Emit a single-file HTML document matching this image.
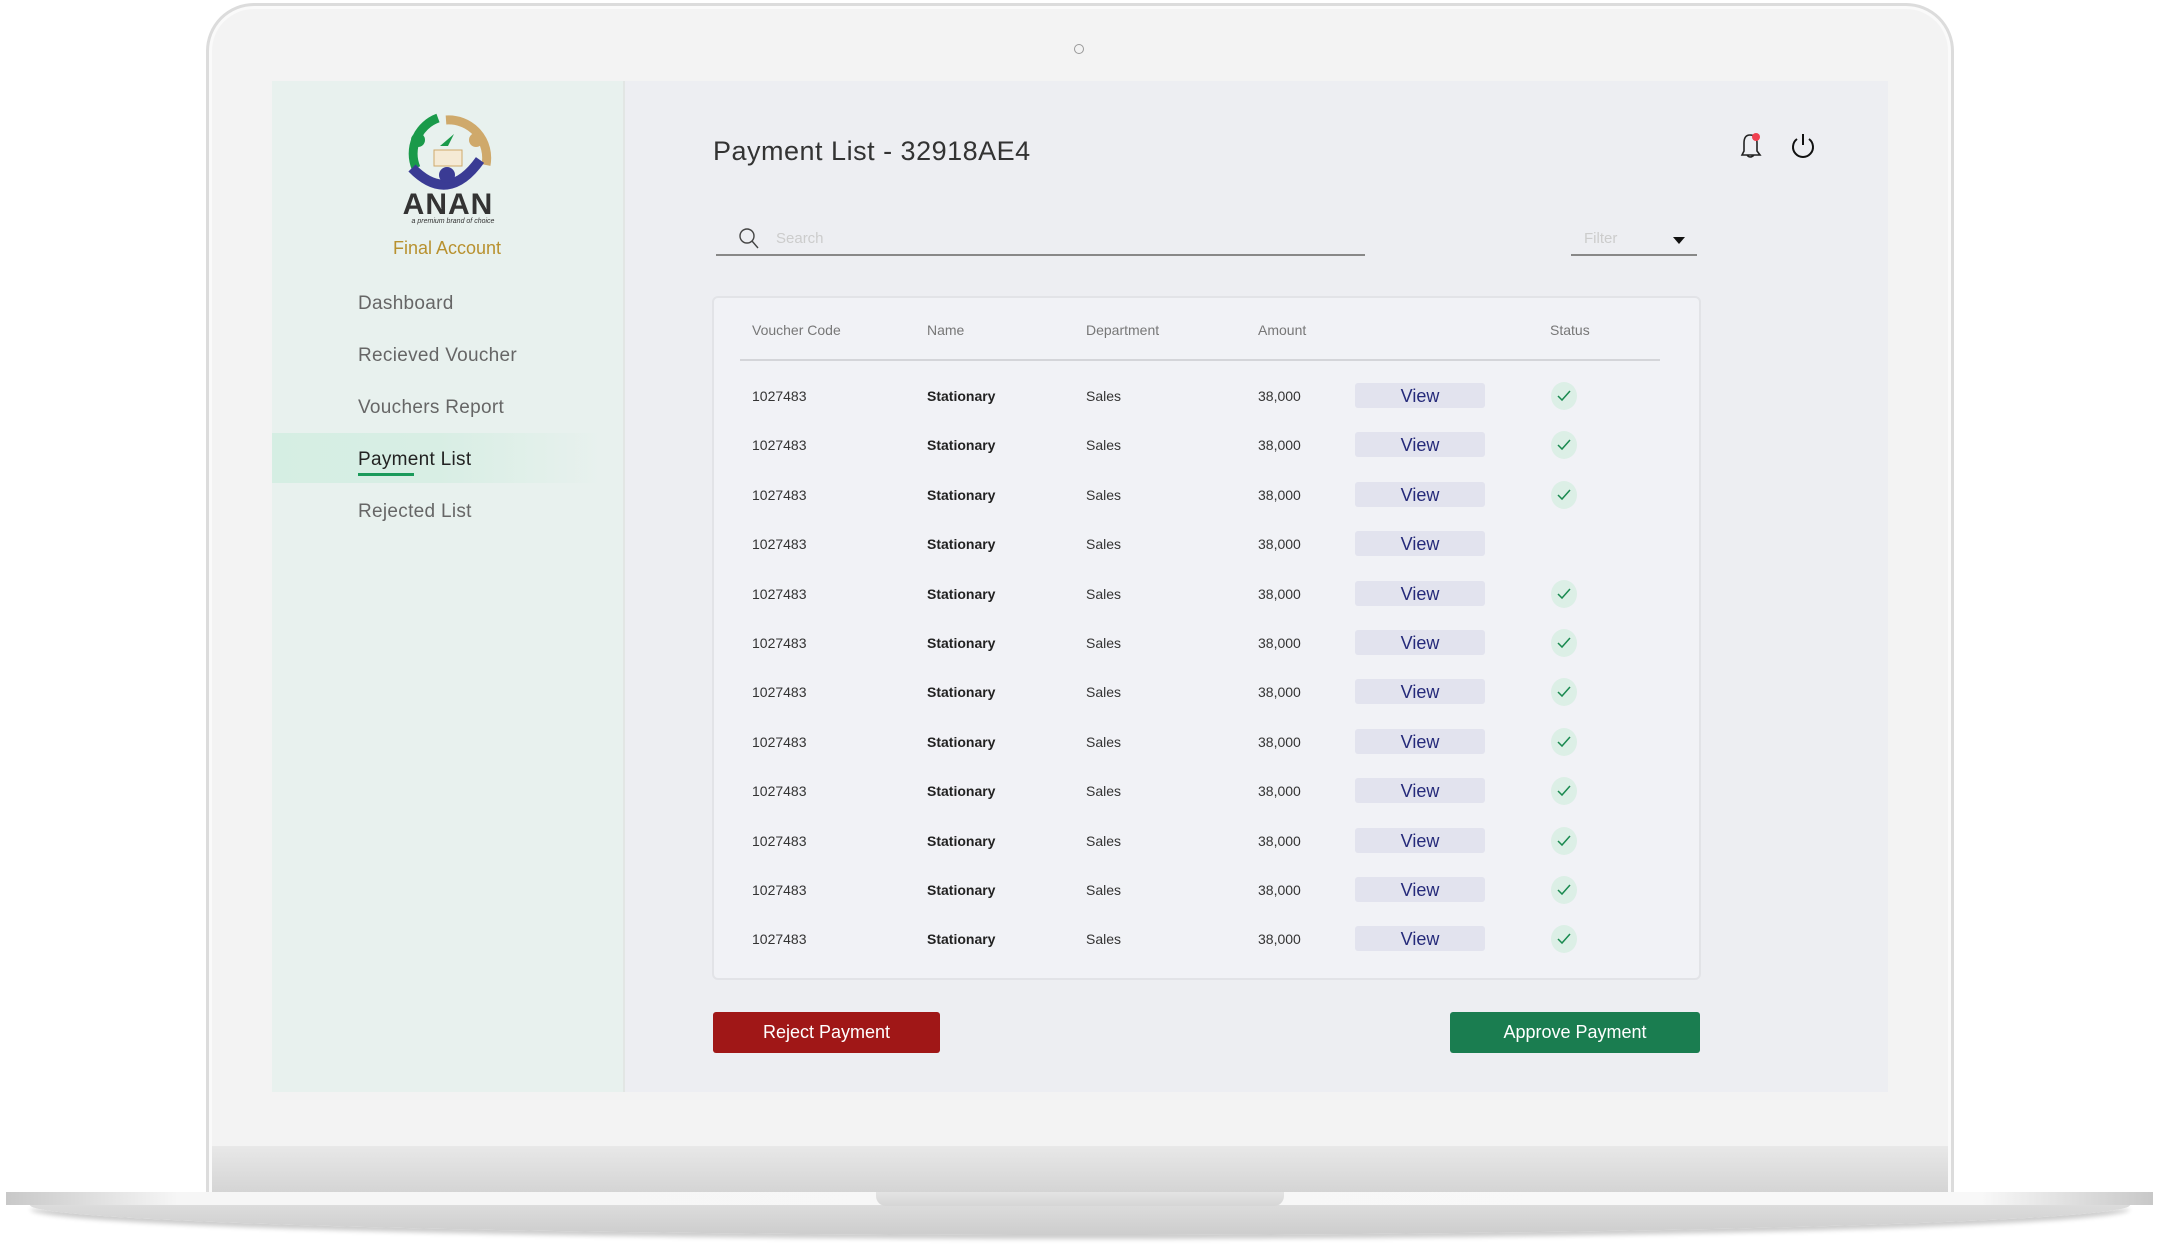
<!DOCTYPE html>
<html><head><meta charset="utf-8"><style>
*{margin:0;padding:0;box-sizing:border-box}
body{width:2178px;height:1250px;background:#fff;position:relative;overflow:hidden;font-family:"Liberation Sans",sans-serif}
.abs{position:absolute}
.bezel{left:206px;top:3px;width:1748px;height:1192px;border-radius:48px 48px 0 0;background:#f3f3f3;border:3px solid #dcdcdc;box-shadow:inset 0 0 0 3px #fafafa}
.chin{left:212px;top:1146px;width:1736px;height:47px;background:linear-gradient(#e8e8e8,#d4d4d4)}
.base{left:6px;top:1192px;width:2147px;height:13px;background:linear-gradient(90deg,#c8c8c8,#f6f6f6 8%,#f8f8f8 92%,#c8c8c8)}
.base2{left:30px;top:1205px;width:2100px;height:30px;background:linear-gradient(#dcdcdc,#cdcdcd);border-radius:0 0 50% 50%/0 0 100% 100%;box-shadow:0 4px 5px rgba(0,0,0,.2)}
.notch{left:876px;top:1192px;width:408px;height:14px;background:linear-gradient(#e4e4e4,#d6d6d6);border-radius:0 0 10px 10px}
.screen{left:272px;top:81px;width:1616px;height:1011px;background:#edeef2}
.side{left:272px;top:81px;width:353px;height:1011px;background:#e8f1ee;border-right:2px solid #e2e6e4}
.nav{position:absolute;left:358px;font-size:19px;color:#666;letter-spacing:.3px}
.card{left:712px;top:296px;width:989px;height:684px;background:#f1f2f6;border:2px solid #e2e3e7;border-radius:6px}
.th{position:absolute;top:322px;font-size:14px;color:#777}
.row{position:absolute;left:0;width:2178px;height:30px;font-size:14px;color:#333}
.row span{position:absolute;top:7px}
.view{position:absolute;left:1355px;top:2px;width:130px;height:25px;background:#e2e3ee;border-radius:3px;color:#252a7a;font-size:18px;text-align:center;line-height:27px}
.chk{position:absolute;left:1551px;top:1px;width:26px;height:28px;border-radius:50%;background:#dcefe6}
.btn{height:41px;top:1012px;color:#fff;font-size:18px;text-align:center;line-height:41px;border-radius:3px}
</style></head><body>
<div class="abs bezel"></div>
<div class="abs chin"></div>
<div class="abs base2"></div>
<div class="abs base"></div>
<div class="abs notch"></div>
<div class="abs" style="left:1074px;top:44px;width:10px;height:10px;border:1px solid #999;border-radius:50%"></div>
<div class="abs screen"></div>
<div class="abs side"></div>
<div class="abs" style="left:272px;top:433px;width:330px;height:50px;background:linear-gradient(90deg,#d5eee3,#d8eee4 50%,rgba(232,241,238,0))"></div>

<svg class="abs" style="left:398px;top:110px" width="100" height="82" viewBox="0 0 100 82">
<path d="M40 8 A38 38 0 0 0 18 58" stroke="#1a9a4a" stroke-width="9" fill="none"/>
<path d="M48 10 A38 38 0 0 1 88 55" stroke="#cfa96b" stroke-width="9" fill="none"/>
<path d="M14 58 Q50 95 82 50" stroke="#3a3b94" stroke-width="10" fill="none"/>
<circle cx="20" cy="30" r="7" fill="#1a9a4a"/><circle cx="78" cy="30" r="7" fill="#cfa96b"/><circle cx="49" cy="65" r="8" fill="#3a3b94"/>
<rect x="36" y="40" width="28" height="16" fill="#f5ead5" stroke="#cfa96b"/>
<path d="M42 36 L56 24 L50 36Z" fill="#1a9a4a"/>
</svg>
<div class="abs" style="left:398px;top:188px;width:100px;text-align:center;font-size:30px;font-weight:bold;color:#333;letter-spacing:1px">ANAN</div>
<div class="abs" style="left:398px;top:218px;width:110px;text-align:center;font-size:7px;font-style:italic;color:#333">a premium brand of choice</div>
<div class="abs" style="left:362px;top:238px;width:170px;text-align:center;font-size:18px;color:#b8912f">Final Account</div>
<div class="nav" style="top:293px">Dashboard</div>
<div class="nav" style="top:345px">Recieved Voucher</div>
<div class="nav" style="top:397px">Vouchers Report</div>
<div class="nav" style="top:449px;color:#222">Payment List</div>
<div class="abs" style="left:358px;top:473px;width:56px;height:3px;background:#1a9a5a"></div>
<div class="nav" style="top:501px">Rejected List</div>

<div class="abs" style="left:713px;top:136px;font-size:27px;color:#333;letter-spacing:.5px">Payment List - 32918AE4</div>
<svg class="abs" style="left:1736px;top:130px" width="30" height="32" viewBox="0 0 30 32"><path d="M6 25 L8 21 L8 13 Q8 5 14 5 Q21 5 21 13 L21 21 L24 25 Z M11 25 Q14 29 18 25" stroke="#222" stroke-width="1.6" fill="none"/><circle cx="20" cy="7" r="4" fill="#f04050"/></svg>
<svg class="abs" style="left:1789px;top:132px" width="28" height="28" viewBox="0 0 28 28"><path d="M8 7 A10 10 0 1 0 20 7" stroke="#111" stroke-width="2" fill="none"/><path d="M14 2 V13" stroke="#111" stroke-width="2"/></svg>

<svg class="abs" style="left:738px;top:227px" width="22" height="24" viewBox="0 0 22 24"><circle cx="9" cy="9" r="7" stroke="#444" stroke-width="1.4" fill="none"/><path d="M14 14 L20 21" stroke="#444" stroke-width="1.4"/></svg>
<div class="abs" style="left:776px;top:230px;font-size:15px;color:#ccc">Search</div>
<div class="abs" style="left:716px;top:254px;width:649px;height:2px;background:#888"></div>
<div class="abs" style="left:1584px;top:230px;font-size:15px;color:#ccc">Filter</div>
<div class="abs" style="left:1673px;top:237px;width:0;height:0;border-left:6px solid transparent;border-right:6px solid transparent;border-top:7px solid #111"></div>
<div class="abs" style="left:1571px;top:254px;width:126px;height:2px;background:#888"></div>

<div class="abs card"></div>
<div class="th" style="left:752px">Voucher Code</div>
<div class="th" style="left:927px">Name</div>
<div class="th" style="left:1086px">Department</div>
<div class="th" style="left:1258px">Amount</div>
<div class="th" style="left:1550px">Status</div>
<div class="abs" style="left:740px;top:359px;width:920px;height:2px;background:#d4d5d9"></div>

<div id="rows"></div>
<script>
var h='';for(var i=0;i<12;i++){var t=381+i*49.4;h+='<div class="row" style="top:'+t+'px"><span style="left:752px">1027483</span><span style="left:927px;font-weight:bold;color:#222">Stationary</span><span style="left:1086px">Sales</span><span style="left:1258px">38,000</span><div class="view">View</div>'+(i==3?'':'<div class="chk"><svg width="26" height="28" viewBox="0 0 26 28"><path d="M7 14 L11 18 L19 9" stroke="#1a8a50" stroke-width="1.5" fill="none"/></svg></div>')+'</div>';}
document.getElementById('rows').innerHTML=h;
</script>

<div class="abs btn" style="left:713px;width:227px;background:#a01717">Reject Payment</div>
<div class="abs btn" style="left:1450px;width:250px;background:#1a7d50">Approve Payment</div>
</body></html>
